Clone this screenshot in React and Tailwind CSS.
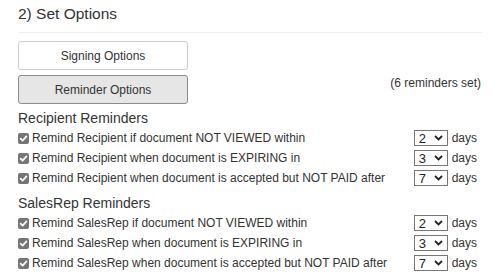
import React from "react";

function Check() {
  return (
    <span className="flex h-[11px] w-[11px] shrink-0 items-center justify-center rounded-[2px] bg-[#767676]">
      <svg width="9" height="9" viewBox="0 0 10 10">
        <path d="M1.8 5.2 L4 7.4 L8.3 2.6" fill="none" stroke="#fff" strokeWidth="1.9" strokeLinecap="round" strokeLinejoin="round" />
      </svg>
    </span>
  );
}

function Sel({ v }) {
  return (
    <div className="flex h-[16px] w-[34px] items-center justify-between border border-[#767676] bg-white pl-[4px] pr-[4px] text-[13px] leading-none text-[#222]">
      <span>{v}</span>
      <svg width="9" height="6" viewBox="0 0 9 6">
        <path d="M1 1 L4.5 4.5 L8 1" fill="none" stroke="#222" strokeWidth="1.8" />
      </svg>
    </div>
  );
}

function Row({ text, v }) {
  return (
    <div className="flex h-[20px] items-center justify-between">
      <div className="flex items-center gap-[3px]">
        <Check />
        <span>{text}</span>
      </div>
      <div className="flex items-center gap-[4px] pr-[5px]">
        <Sel v={v} />
        <span>days</span>
      </div>
    </div>
  );
}

export default function App() {
  return (
    <div className="h-[277px] w-[500px] overflow-hidden bg-white px-[18px] text-[12px] text-[#333]" style={{ fontFamily: '"Liberation Sans", Arial, sans-serif' }}>
      <div className="pt-[4px] text-[15.5px] leading-[20px] text-[#333]">2) Set Options</div>
      <div className="mt-[8px] h-px bg-[#eeeeee]" />
      <div className="mt-[8px] flex h-[29px] w-[170px] items-center justify-center rounded-[3px] border border-[#cccccc] bg-white">Signing Options</div>
      <div className="mt-[5px] flex items-start justify-between">
        <div className="flex h-[29px] w-[170px] items-center justify-center rounded-[3px] border border-[#8c8c8c] bg-[#e6e6e6]">Reminder Options</div>
        <span className="mr-[1px] mt-[1px] leading-[14px]">(6 reminders set)</span>
      </div>
      <div className="mt-[4px] text-[14px] leading-[20px]">Recipient Reminders</div>
      <div>
        <Row text="Remind Recipient if document NOT VIEWED within" v="2" />
        <Row text="Remind Recipient when document is EXPIRING in" v="3" />
        <Row text="Remind Recipient when document is accepted but NOT PAID after" v="7" />
      </div>
      <div className="mt-[5px] text-[14px] leading-[20px]">SalesRep Reminders</div>
      <div>
        <Row text="Remind SalesRep if document NOT VIEWED within" v="2" />
        <Row text="Remind SalesRep when document is EXPIRING in" v="3" />
        <Row text="Remind SalesRep when document is accepted but NOT PAID after" v="7" />
      </div>
    </div>
  );
}
